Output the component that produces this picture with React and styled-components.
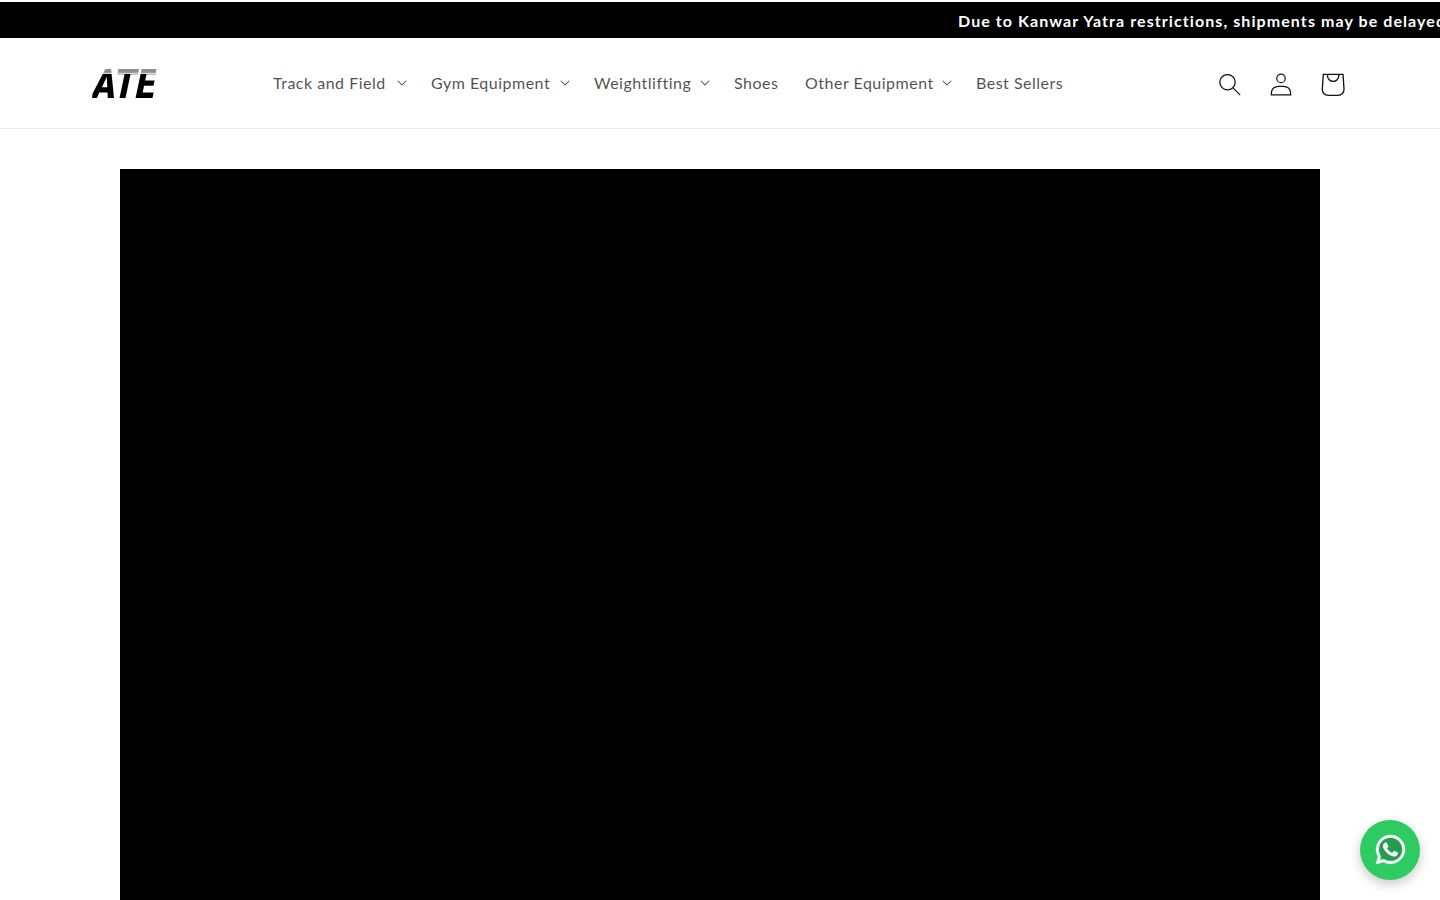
import React from "react";
import styled, { createGlobalStyle } from "styled-components";

const Global = createGlobalStyle`
  html, body { margin: 0; padding: 0; background: #fff; }
  body { font-family: "Lato", "Liberation Sans", sans-serif; }
  #root { height: 100vh; overflow: hidden; }
`;
const Page = styled.div`
  padding-top: 2px;
`;
const Announcement = styled.div`
  height: 36px;
  background: #000;
  overflow: hidden;
  display: flex;
  align-items: center;
  padding-left: 958px;
`;
const AnnouncementText = styled.span`
  color: #fff;
  font-size: 16px;
  font-weight: 700;
  letter-spacing: 1.08px;
  white-space: nowrap;
  padding-top: 1px;
`;
const Header = styled.header`
  height: 90px;
  border-bottom: 1px solid #ececec;
  display: flex;
  align-items: center;
  padding: 0 86px 0 93px;
`;
const LogoLink = styled.a`
  width: 168px;
  flex: none;
  display: flex;
  align-items: center;
  padding-top: 2px;
`;
const LogoText = styled.span`
  font-family: "Roboto", "Liberation Sans", sans-serif;
  font-size: 41px;
  line-height: 30px;
  font-weight: 900;
  font-style: italic;
  color: transparent;
  display: inline-block;
  transform: scaleX(0.87) skewX(-4deg);
  transform-origin: left center;
  background: linear-gradient(#8f8f8f 0 4px, #fff 4px 5px, #000 5px);
  -webkit-background-clip: text;
  background-clip: text;
`;
const Nav = styled.nav`
  display: flex;
  align-items: center;
  flex: 1;
  padding: 0 0 2px 12px;
`;
const NavItem = styled.a`
  display: flex;
  align-items: center;
  width: ${(p) => p.$w}px;
  flex: none;
  color: rgba(18, 18, 18, 0.75);
  font-size: 16px;
  letter-spacing: 0.5px;
  white-space: nowrap;
  position: relative;
`;
const Caret = styled.svg`
  position: absolute;
  left: ${(p) => p.$x}px;
  top: 50%;
  width: 10px;
  height: 6px;
  margin-top: -2px;
  fill: rgba(18, 18, 18, 0.75);
`;
const Icons = styled.div`
  display: flex;
  align-items: center;
  gap: 7px;
  padding-top: 2px;
`;
const IconBox = styled.a`
  width: 44px;
  height: 44px;
  display: flex;
  align-items: center;
  justify-content: center;
  color: #121212;
  svg { fill: currentColor; display: block; flex: none; }
`;
const Main = styled.main`
  padding: 40px 120px 0;
`;
const Video = styled.div`
  height: 800px;
  background: #000;
`;
const WhatsApp = styled.a`
  position: fixed;
  right: 20px;
  bottom: 20px;
  width: 60px;
  height: 60px;
  padding-bottom: 1px;
  box-sizing: border-box;
  border-radius: 50%;
  background: #2ecb62;
  box-shadow: 0 4px 12px rgba(0, 0, 0, 0.22);
  display: flex;
  align-items: center;
  justify-content: center;
`;

const caret = "M9.354.646a.5.5 0 00-.708 0L5 4.293 1.354.646a.5.5 0 00-.708.708l4 4a.5.5 0 00.708 0l4-4a.5.5 0 000-.708z";
const items = [
  { label: "Track and Field", w: 158, c: 124 },
  { label: "Gym Equipment", w: 163, c: 129 },
  { label: "Weightlifting", w: 140, c: 106 },
  { label: "Shoes", w: 71 },
  { label: "Other Equipment", w: 171, c: 137 },
  { label: "Best Sellers", w: 100 },
];

export default function App() {
  return (
    <Page>
      <Global />
      <Announcement>
        <AnnouncementText>Due to Kanwar Yatra restrictions, shipments may be delayed.</AnnouncementText>
      </Announcement>
      <Header>
        <LogoLink><LogoText>ATE</LogoText></LogoLink>
        <Nav>
          {items.map((it) => (
            <NavItem key={it.label} $w={it.w}>
              {it.label}
              {it.c && (
                <Caret $x={it.c} viewBox="0 0 10 6"><path d={caret} /></Caret>
              )}
            </NavItem>
          ))}
        </Nav>
        <Icons>
          <IconBox>
            <svg width="22" height="23" viewBox="0 0 18 19"><path fillRule="evenodd" clipRule="evenodd" d="M11.03 11.68A5.784 5.784 0 112.85 3.5a5.784 5.784 0 018.18 8.18zm.26 1.12a6.78 6.78 0 11.72-.7l5.4 5.4a.5.5 0 11-.71.7l-5.41-5.4z" /></svg>
          </IconBox>
          <IconBox>
            <svg width="22" height="23" viewBox="0 0 18 19"><path fillRule="evenodd" clipRule="evenodd" d="M6 4.5a3 3 0 116 0 3 3 0 01-6 0zm3-4a4 4 0 100 8 4 4 0 000-8zm5.58 12.15c1.12.82 1.83 2.24 1.91 4.85H1.51c.08-2.6.79-4.03 1.9-4.85C4.66 11.75 6.5 11.5 9 11.5s4.35.26 5.58 1.15zM9 10.5c-2.5 0-4.65.24-6.17 1.35C1.27 12.98.5 14.93.5 18v.5h17V18c0-3.07-.77-5.02-2.33-6.15-1.52-1.1-3.67-1.35-6.17-1.35z" /></svg>
          </IconBox>
          <IconBox>
            <svg width="53" height="53" viewBox="0 0 40 40"><path fillRule="evenodd" clipRule="evenodd" d="m15.75 11.8h-3.16l-.77 11.6a5 5 0 0 0 4.99 5.34h7.38a5 5 0 0 0 4.99-5.33L28.4 11.8zm0 1h-2.22l-.71 10.67a4 4 0 0 0 3.99 4.27h7.38a4 4 0 0 0 4-4.27l-.72-10.67h-2.22v.63a4.75 4.75 0 1 1-9.5 0zm8.5 0h-7.5v.63a3.75 3.75 0 1 0 7.5 0z" /></svg>
          </IconBox>
        </Icons>
      </Header>
      <Main><Video /></Main>
      <WhatsApp>
        <svg width="33" height="33" viewBox="0 0 448 512">
          <circle cx="224" cy="254" r="190" fill="#249c4b" />
          <path fill="#fff" stroke="#fff" strokeWidth="8" d="M380.9 97.1C339 55.1 283.2 32 223.9 32c-122.4 0-222 99.6-222 222 0 39.1 10.2 77.3 29.6 111L0 480l117.7-30.9c32.4 17.7 68.9 27 106.1 27h.1c122.3 0 224.1-99.6 224.1-222 0-59.3-25.2-115-67.1-157zm-157 341.6c-33.2 0-65.7-8.9-94-25.7l-6.7-4-69.8 18.3L72 359.2l-4.4-7c-18.5-29.4-28.2-63.3-28.2-98.2 0-101.7 82.8-184.5 184.6-184.5 49.3 0 95.6 19.2 130.4 54.1 34.8 34.9 56.2 81.2 56.1 130.5 0 101.8-84.9 184.6-186.6 184.6zm101.2-138.2c-5.5-2.8-32.8-16.2-37.9-18-5.1-1.9-8.8-2.8-12.5 2.8-3.7 5.6-14.3 18-17.6 21.8-3.2 3.7-6.5 4.2-12 1.4-32.6-16.3-54-29.1-75.5-66-5.7-9.8 5.7-9.1 16.3-30.3 1.8-3.7.9-6.9-.5-9.7-1.4-2.8-12.5-30.1-17.1-41.2-4.5-10.8-9.1-9.3-12.5-9.5-3.2-.2-6.9-.2-10.6-.2-3.7 0-9.7 1.4-14.8 6.9-5.1 5.6-19.4 19-19.4 46.3 0 27.3 19.9 53.7 22.6 57.4 2.8 3.7 39.1 59.7 94.8 83.8 35.2 15.2 49 16.5 66.6 13.9 10.7-1.6 32.8-13.4 37.4-26.4 4.6-13 4.6-24.1 3.2-26.4-1.3-2.5-5-3.9-10.5-6.6z" />
        </svg>
      </WhatsApp>
    </Page>
  );
}
